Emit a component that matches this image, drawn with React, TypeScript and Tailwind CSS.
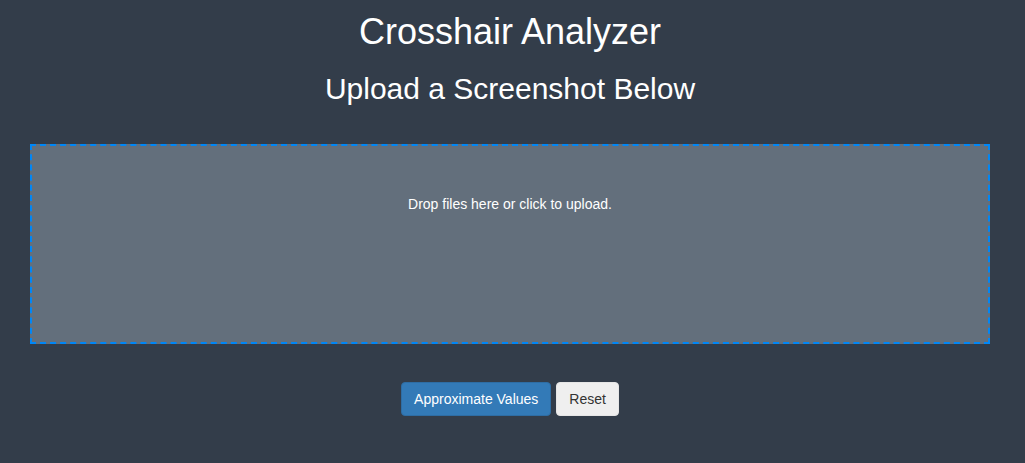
import React from 'react'

const App = () => (
  <div className="min-h-screen w-full bg-[#333d4a] text-white font-['Liberation_Sans',Arial,sans-serif]">
    <div className="w-[1020px]">
      <div className="flex flex-col items-center pt-3">
        <h1 className="text-[36px] leading-[40px] font-normal">Crosshair Analyzer</h1>
        <h2 className="mt-5 text-[30px] leading-[33px] font-normal">Upload a Screenshot Below</h2>
      </div>
      <div className="px-[30px] mt-[39px]">
        <div className="h-[200px] border-2 border-dashed border-[#0087f7] bg-[#636f7c] pt-[48px] text-center text-[14px] leading-5 text-white cursor-pointer">
          Drop files here or click to upload.
        </div>
      </div>
      <div className="flex justify-center gap-[5px] mt-[38px]">
        <button className="h-[34px] px-3 rounded bg-[#337ab7] border border-[#2e6da4] text-[14px] text-white">
          Approximate Values
        </button>
        <button className="h-[34px] px-3 rounded bg-[#efefef] border border-[#e6e6e6] text-[14px] text-[#333]">
          Reset
        </button>
      </div>
    </div>
  </div>
)

export default App
